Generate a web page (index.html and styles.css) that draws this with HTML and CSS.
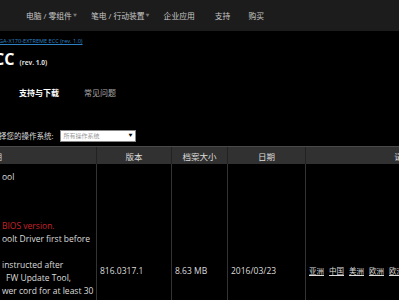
FILE: index.html
```html
<!DOCTYPE html>
<html lang="zh-CN">
<head>
    <meta charset="UTF-8">
    <meta name="viewport" content="width=device-width, initial-scale=1.0">
    <title>GA-X170-EXTREME ECC (rev. 1.0) | 支持与下载</title>
    <link rel="stylesheet" href="styles.css">
</head>
<body>
    <div class="topnav">
        <a href="#">电脑 / 零组件<span class="caret">▼</span></a>
        <a href="#">笔电 / 行动装置<span class="caret">▼</span></a>
        <a href="#">企业应用</a>
        <a href="#">支持</a>
        <a href="#">购买</a>
    </div>

    <div class="page">
        <a class="crumb" href="#">GA-X170-EXTREME ECC (rev. 1.0)</a>

        <div class="title-row">
            <h1>ECC <small>(rev. 1.0)</small></h1>
            <button type="button" class="buy">购买</button>
        </div>

        <div class="tabs">
            <a href="#" class="active">支持与下载</a>
            <a href="#">常见问题</a>
        </div>

        <div class="os-row">
            <label>选择您的操作系统:</label>
            <div class="select"><span>所有操作系统</span><span class="arrow">▼</span></div>
        </div>

        <table class="downloads">
            <thead>
                <tr>
                    <th class="c-desc">说明</th>
                    <th class="c-ver">版本</th>
                    <th class="c-size">档案大小</th>
                    <th class="c-date">日期</th>
                    <th class="c-dl">请点选下载</th>
                </tr>
            </thead>
            <tbody>
                <tr>
                    <td class="c-desc">
                        <p class="first">ool</p>
                        <p><span class="warn">BIOS version.</span><br>oolt Driver first before</p>
                        <p>instructed after<br><span class="indent">FW Update Tool,</span><br>wer cord for at least 30<br>econds to complete the<br>update, then power on<br>the system again.</p>
                    </td>
                    <td>816.0317.1</td>
                    <td>8.63 MB</td>
                    <td>2016/03/23</td>
                    <td class="c-dl-links">
                        <a href="#">亚洲</a><a href="#">中国</a><a href="#">美洲</a><a href="#">欧洲</a><a href="#">欧洲(US)</a>
                    </td>
                </tr>
            </tbody>
        </table>
    </div>
</body>
</html>
```

FILE: styles.css
```css
body { margin: 0; background-color: #000; color: #ddd; font-family: "Open Sans", "Noto Sans CJK SC", sans-serif; overflow: hidden; }
a { color: inherit; text-decoration: none; }

.topnav { height: 31px; background-color: #1c1c1c; display: flex; align-items: center; padding-left: 26px; gap: 14px; font-size: 7.8px; white-space: nowrap; }
.topnav a { color: #c8c8c8; }
.topnav a:nth-child(4) { margin-left: 6px; }
.topnav a:nth-child(5) { margin-left: 4px; }
.caret { font-size: 4px; color: #777; margin-left: 1px; vertical-align: 2px; }

.page { margin-left: -4px; }
.crumb { display: block; margin-top: 6px; margin-left: 3px; font-size: 5.6px; line-height: 8px; color: #2d80c2; text-decoration: underline; white-space: nowrap; }

.title-row { display: flex; justify-content: space-between; align-items: flex-end; margin-top: 4px; height: 24px; }
.title-row h1 { margin: 0 0 0 -11px; font-size: 16px; font-weight: bold; color: #fff; line-height: 20px; white-space: nowrap; }
.title-row h1 small { font-size: 6.5px; font-weight: bold; color: #ddd; margin-left: 1px; }
.buy { margin-right: -30px; margin-bottom: 2px; background-color: #111; border: 1px solid #999; color: #ccc; font-size: 8px; padding: 2px 3px; font-family: inherit; }

.tabs { display: flex; gap: 25px; margin-top: 15px; padding-left: 23px; font-size: 8px; line-height: 10px; }
.tabs a { color: #aaa; }
.tabs a.active { color: #fff; font-weight: bold; }

.os-row { display: flex; align-items: center; gap: 7px; margin-top: 32px; font-size: 7.5px; line-height: 12px; }
.os-row label { margin-left: -4.5px; color: #ddd; white-space: nowrap; }
.select { width: 69px; height: 10px; background-color: #fff; border: 1px solid #888; display: flex; justify-content: space-between; align-items: center; padding: 0 3px 0 2px; font-size: 6px; color: #999; }
.select .arrow { font-size: 4px; color: #000; }

.downloads { margin-top: 4px; border-collapse: collapse; table-layout: fixed; width: 529px; font-size: 8.5px; }
.downloads th { background-color: #313131; color: #ddd; font-weight: normal; height: 17px; padding: 0; border-top: 1px solid #4a4a4a; border-left: 1px solid #222; text-align: center; }
.downloads td { border-left: 1px solid #333; padding: 4px 3px; vertical-align: middle; color: #ddd; white-space: nowrap; }
.downloads th:first-child, .downloads td:first-child { border-left: none; }
.c-desc { width: 100px; }
.c-ver { width: 74px; }
.c-size { width: 55px; }
.c-date { width: 77px; }
.downloads th.c-desc { text-align: left; text-indent: -11px; }
.downloads td.c-desc { overflow: hidden; padding: 6px 0 28px 6px; }
.c-desc p { margin: 0 0 13px; line-height: 13px; }
.c-desc p.first { margin-bottom: 36px; }
.c-desc .warn { color: #c8222a; }
.c-desc .indent { padding-left: 4px; }
.downloads td.c-dl-links { padding-left: 3px; }
.c-dl-links a { text-decoration: underline; margin-right: 5px; font-size: 7.5px; }
```
